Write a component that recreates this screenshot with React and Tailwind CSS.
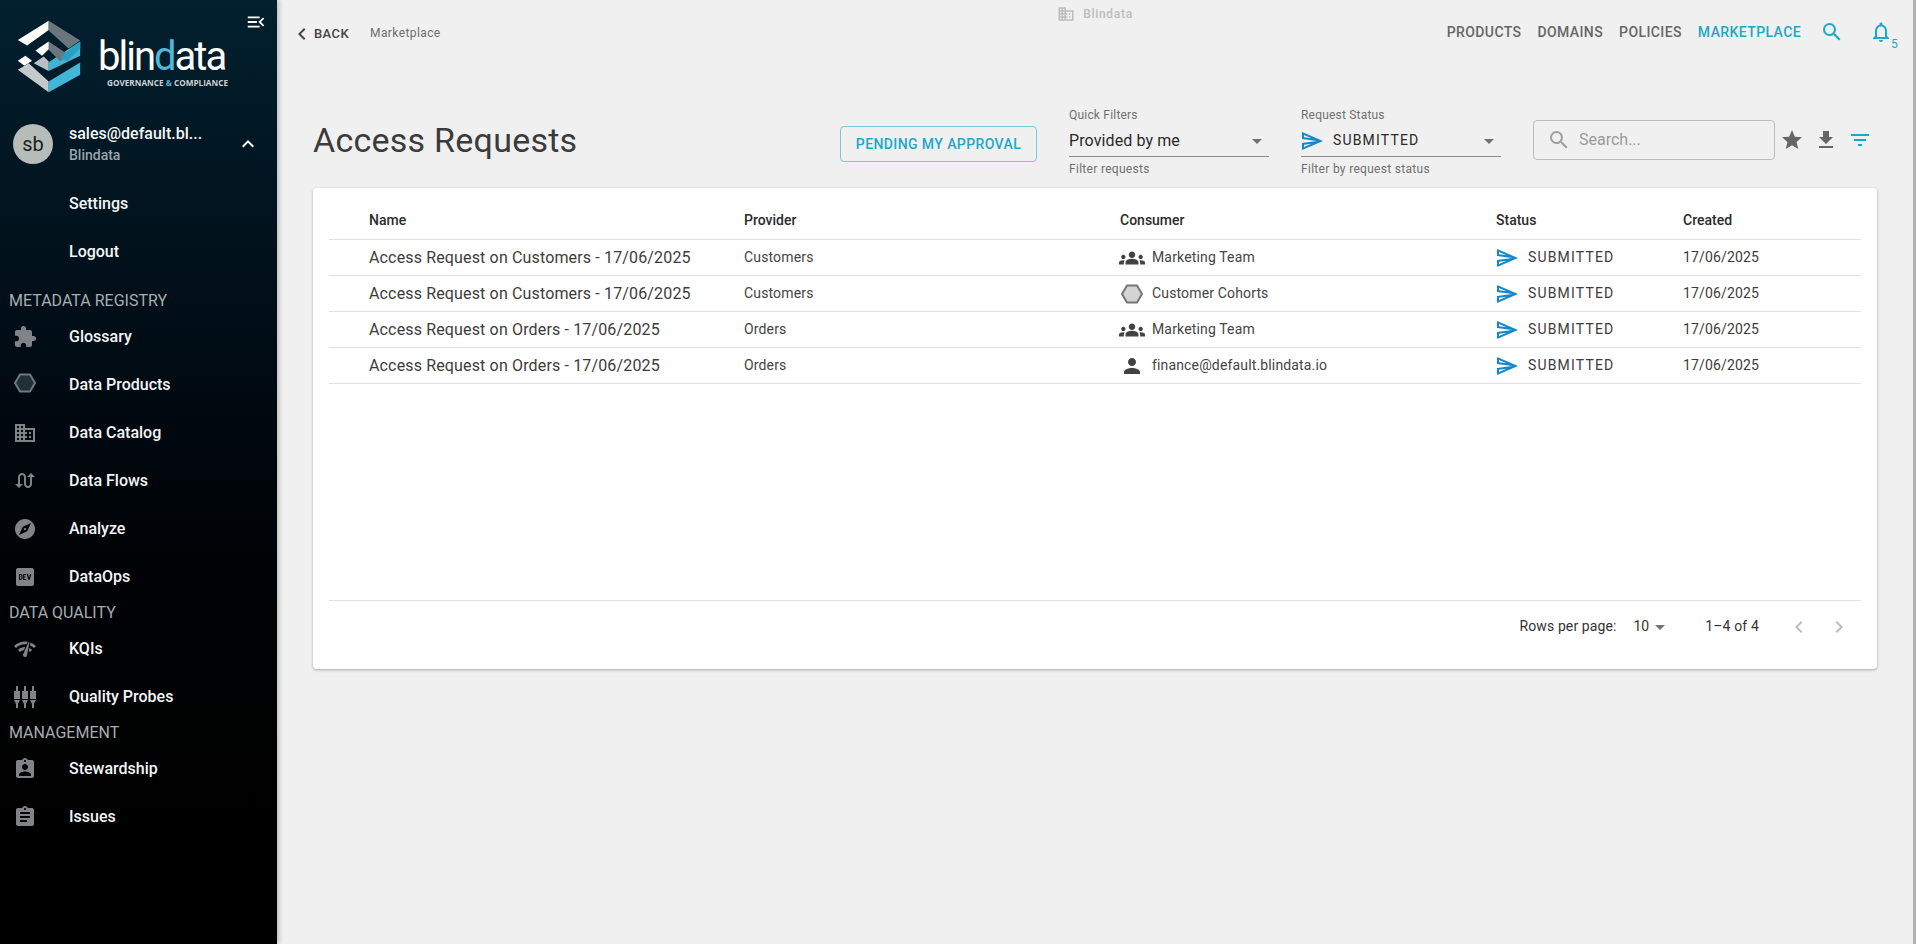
import React from "react";
import {
  MdExtension, MdDomain, MdExplore, MdLogoDev, MdNetworkCheck, MdAssignmentInd, MdAssignment,
  MdKeyboardArrowUp, MdChevronLeft, MdChevronRight, MdSearch, MdNotificationsNone, MdStar, MdGetApp,
  MdFilterList, MdGroups, MdPerson, MdArrowDropDown, MdMenuOpen, MdSwapCalls, MdOutlineSend,
} from "react-icons/md";

const Hexagon = ({ className, fill, stroke }) => (
  <svg viewBox="0 0 24 24" className={className}>
    <path d="M7 3.5h10L22 12l-5 8.5H7L2 12z" fill={fill} stroke={stroke} strokeWidth="2" strokeLinejoin="round" />
  </svg>
);

const Probes = ({ className }) => (
  <svg viewBox="0 0 24 24" className={className} fill="currentColor">
    <path d="M3 1h2v5h2v8H1V6h2zM1 15h6l-2 4v4H3v-4zM11 1h2v5h2v8H9V6h2zM9 15h6l-2 4v4h-2v-4zM19 1h2v5h2v8h-6V6h2zM17 15h6l-2 4v4h-2v-4z" />
  </svg>
);

const Logo = () => (
  <svg viewBox="50 60 192 220" className="w-[64px] h-[73px] shrink-0">
    <polygon points="52,120 145,62 145,90 80,137" fill="#ffffff" />
    <polygon points="145,62 240,122 205,146 145,92" fill="#6b767c" />
    <polygon points="240,125 240,168 145,214 145,187" fill="#3fb4d6" />
    <polygon points="145,125 205,165 180,185 145,150" fill="#6b767c" />
    <polygon points="180,172 240,125 240,145 200,185" fill="#2a9fc4" />
    <polygon points="105,152 145,125 145,148 125,168" fill="#ffffff" />
    <polygon points="52,183 75,168 95,183 72,198" fill="#ffffff" />
    <polygon points="100,190 130,170 145,185 145,214" fill="#b9bfc2" />
    <polygon points="52,210 85,190 145,245 145,278" fill="#c4c9cc" />
    <polygon points="145,278 240,225 240,188 145,245" fill="#43b6d8" />
  </svg>
);

const Section = ({ children }) => (
  <div className="h-6 pl-[9px] flex items-center text-[16px] leading-none text-[#a6adb1]">{children}</div>
);

const Item = ({ icon, children }) => (
  <div className="h-12 flex items-center pl-[13px]">
    <span className="w-[56px] shrink-0 text-[#808486] flex items-center">{icon}</span>
    <span className="text-[16px] font-medium text-[#f4f6f7] leading-none">{children}</span>
  </div>
);

const Sidebar = () => (
  <aside className="w-[277px] h-full shrink-0 relative z-10 bg-gradient-to-b from-[#02202f] to-[#000000] shadow-[2px_0_5px_rgba(0,0,0,0.22)]">
    <MdMenuOpen className="absolute top-[11px] left-[245px] w-[22px] h-[22px] text-white" />
    <div className="h-[108px] flex pl-[17px] pt-[20px]">
      <Logo />
      <div className="ml-[17px] pt-[15px]">
        <div className="text-[40px] leading-[44px] font-normal tracking-[-2px] text-white">
          blin<span className="text-[#4db8d8]">d</span>ata
        </div>
        <div className="text-[8.2px] leading-[10px] ml-[9px] -mt-[1px] font-bold text-[#ccd3d7] font-['Open_Sans',sans-serif] whitespace-nowrap">
          GOVERNANCE <span className="text-[#4db8d8]">&amp;</span> COMPLIANCE
        </div>
      </div>
    </div>
    <div className="h-[72px] flex items-center pl-[13px]">
      <div className="w-10 h-10 rounded-full bg-[#b6bcb8] text-[#1e1e1e] text-[20px] flex items-center justify-center shrink-0">sb</div>
      <div className="ml-4 w-[150px]">
        <div className="text-[16px] leading-[22px] font-medium text-[#f4f6f7] whitespace-nowrap">sales@default.bl...</div>
        <div className="text-[14px] leading-[20px] font-medium text-[#9ba5aa]">Blindata</div>
      </div>
      <MdKeyboardArrowUp className="w-6 h-6 text-white ml-[17px]" />
    </div>
    <div className="h-12 flex items-center pl-[69px] text-[16px] font-medium text-[#f4f6f7]">Settings</div>
    <div className="h-12 flex items-center pl-[69px] text-[16px] font-medium text-[#f4f6f7]">Logout</div>
    <div className="h-[13px]" />
    <Section>METADATA REGISTRY</Section>
    <Item icon={<MdExtension className="w-6 h-6" />}>Glossary</Item>
    <Item icon={<Hexagon className="w-6 h-6 -mt-[4px]" fill="#1f3039" stroke="#70797d" />}>Data Products</Item>
    <Item icon={<MdDomain className="w-6 h-6" />}>Data Catalog</Item>
    <Item icon={<MdSwapCalls className="w-6 h-6" />}>Data Flows</Item>
    <Item icon={<MdExplore className="w-6 h-6" />}>Analyze</Item>
    <Item icon={<MdLogoDev className="w-6 h-6" />}>DataOps</Item>
    <Section>DATA QUALITY</Section>
    <Item icon={<MdNetworkCheck className="w-6 h-6" />}>KQIs</Item>
    <Item icon={<Probes className="w-6 h-6" />}>Quality Probes</Item>
    <Section>MANAGEMENT</Section>
    <Item icon={<MdAssignmentInd className="w-6 h-6" />}>Stewardship</Item>
    <Item icon={<MdAssignment className="w-6 h-6" />}>Issues</Item>
  </aside>
);

const TopBar = () => (
  <div className="h-[100px] grid grid-cols-[1fr_auto_1fr] items-start">
    <div className="flex items-center pl-[16px] pt-[21px]">
      <div className="flex items-center text-[#444] text-[13px] font-medium tracking-[0.4px] leading-[24px]">
        <MdChevronLeft className="w-[24px] h-[24px] -ml-[3px] mt-[1px]" />
        <span>BACK</span>
      </div>
      <span className="ml-[21px] text-[12px] tracking-[0.4px] text-[#6e6e6e] -mt-[2px]">Marketplace</span>
    </div>
    <div className="flex items-center pt-[5px] text-[#bcbcbc]">
      <MdDomain className="w-[18px] h-[18px] mr-[8px]" />
      <span className="text-[12px] font-medium tracking-[0.7px]">Blindata</span>
    </div>
    <div className="flex items-center justify-end pt-[20px] pr-[20px] relative">
      <span className="text-[14px] font-medium tracking-[0.4px] text-[#666] leading-[24px]">PRODUCTS</span>
      <span className="ml-[16px] text-[14px] font-medium tracking-[0.4px] text-[#666] leading-[24px]">DOMAINS</span>
      <span className="ml-[16px] text-[14px] font-medium tracking-[0.4px] text-[#666] leading-[24px]">POLICIES</span>
      <span className="ml-[16px] text-[14px] font-medium tracking-[0.4px] text-[#1ba9c9] leading-[24px]">MARKETPLACE</span>
      <MdSearch className="ml-[19px] w-[24px] h-[24px] text-[#1ba9c9]" />
      <div className="ml-[25px] relative w-[24px] h-[24px]">
        <MdNotificationsNone className="w-[24px] h-[24px] text-[#1ba9c9]" />
        <span className="absolute left-[22px] top-[17px] text-[12px] leading-[14px] text-[#1ba9c9]">5</span>
      </div>
    </div>
  </div>
);

const Select = ({ label, helper, children, width }) => (
  <div className={`${width} mt-[4px] text-[12px] text-[#707070]`}>
    <div className="leading-[14px] h-[15px] tracking-[0.2px]">{label}</div>
    <div className="h-[34px] pt-[2px] border-b-[1.5px] border-[#8a8a8a] flex items-center justify-between">
      {children}
      <MdArrowDropDown className="w-6 h-6 text-[#707070]" />
    </div>
    <div className="mt-[5px] leading-[14px] tracking-[0.3px]">{helper}</div>
  </div>
);

const Header = () => (
  <div className="h-[80px] flex items-center">
    <h1 className="text-[34px] font-normal tracking-[0.25px] text-[#3b3b3b] leading-none mr-auto">Access Requests</h1>
    <button className="h-[36px] w-[197px] mt-[8px] border border-[#7cc7d8] rounded-[4px] text-[14px] font-medium tracking-[0.4px] text-[#1ba9c9]">PENDING MY APPROVAL</button>
    <div className="ml-[32px]">
      <Select width="w-[200px]" label="Quick Filters" helper="Filter requests">
        <span className="text-[16px] tracking-[0.1px] text-[#2a2a2a]">Provided by me</span>
      </Select>
    </div>
    <div className="ml-[32px]">
      <Select width="w-[200px]" label="Request Status" helper="Filter by request status">
        <span className="flex items-center text-[14px] tracking-[1.17px] text-[#2a2a2a]">
          <MdOutlineSend className="w-6 h-6 -ml-[1px] text-[#1287c9] mr-[9px]" />SUBMITTED
        </span>
      </Select>
    </div>
    <div className="ml-[32px] w-[242px] h-[40px] border border-[#bcbcbc] rounded-[4px] flex items-center pl-[13px]">
      <MdSearch className="w-[24px] h-[24px] text-[#9e9e9e]" />
      <span className="ml-[8px] text-[16px] text-[#9a9a9a]">Search...</span>
    </div>
    <MdStar className="ml-[5px] w-[24px] h-[24px] text-[#666]" />
    <MdGetApp className="ml-[10px] w-[24px] h-[24px] text-[#666]" />
    <MdFilterList className="ml-[10px] mr-[5px] w-[24px] h-[24px] text-[#1ba9c9]" />
  </div>
);

const cols = "grid grid-cols-[40px_375px_376px_376px_187px_1fr] items-center";

const rows = [
  ["Access Request on Customers - 17/06/2025", "Customers", "team", "Marketing Team"],
  ["Access Request on Customers - 17/06/2025", "Customers", "hex", "Customer Cohorts"],
  ["Access Request on Orders - 17/06/2025", "Orders", "team", "Marketing Team"],
  ["Access Request on Orders - 17/06/2025", "Orders", "user", "finance@default.blindata.io"],
];

const ConsumerIcon = ({ type }) => {
  if (type === "team") return <MdGroups className="w-[26px] h-[26px] -ml-[1px] mr-[7px] text-[#424242]" />;
  if (type === "hex") return <Hexagon className="w-6 h-6 mr-[8px]" fill="#d4d4d4" stroke="#757575" />;
  return <MdPerson className="w-6 h-6 mr-[8px] text-[#424242]" />;
};

const Table = () => (
  <div className="h-[481px] bg-white rounded-[4px] shadow-[0_1px_3px_rgba(0,0,0,0.3)] px-4 flex flex-col">
    <div className={`${cols} h-[52px] pt-[13px] border-b border-[#e0e0e0] text-[14px] font-medium text-[#2b2b2b]`}>
      <span />
      <span>Name</span>
      <span>Provider</span>
      <span>Consumer</span>
      <span>Status</span>
      <span>Created</span>
    </div>
    {rows.map((r, i) => (
      <div key={i} className={`${cols} h-9 border-b border-[#e0e0e0] text-[#3c3c3c]`}>
        <span />
        <span className="text-[16px] tracking-[0.15px]">{r[0]}</span>
        <span className="text-[14px] tracking-[0.15px] text-[#444]">{r[1]}</span>
        <span className="text-[14px] tracking-[0.15px] flex items-center text-[#444]">
          <ConsumerIcon type={r[2]} />
          {r[3]}
        </span>
        <span className="flex items-center text-[14px] tracking-[1.17px]">
          <MdOutlineSend className="w-6 h-6 -ml-[1px] text-[#1287c9] mr-[9px]" />SUBMITTED
        </span>
        <span className="text-[14px] tracking-[0.15px]">17/06/2025</span>
      </div>
    ))}
    <div className="flex-1" />
    <div className="h-[69px] pb-[17px] border-t border-[#e0e0e0] flex items-center text-[14px] text-[#333]">
      <span className="ml-auto tracking-[0.1px]">Rows per page:</span>
      <span className="ml-[17px]">10</span>
      <MdArrowDropDown className="w-6 h-6 text-[#757575] -ml-[1px]" />
      <span className="ml-[33px] tracking-[0.15px]">1–4 of 4</span>
      <MdChevronLeft className="ml-[28px] w-6 h-6 text-[#bdbdbd]" />
      <MdChevronRight className="ml-[16px] mr-[10px] w-6 h-6 text-[#bdbdbd]" />
    </div>
  </div>
);

export default function App() {
  return (
    <div className="h-screen w-full flex overflow-hidden bg-[#f0f0f0] font-['Roboto',sans-serif]">
      <Sidebar />
      <main className="flex-1 min-w-0 h-full">
        <TopBar />
        <div className="px-[36px]">
          <Header />
          <div className="mt-[8px]">
            <Table />
          </div>
        </div>
      </main>
      <div className="w-[3px] h-full shrink-0 bg-[#b3b3b3]" />
    </div>
  );
}
